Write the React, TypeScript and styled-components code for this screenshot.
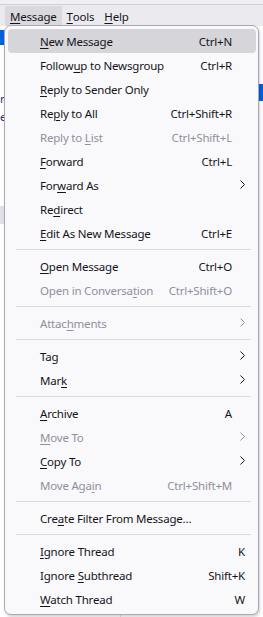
import React from 'react';
import styled, { createGlobalStyle } from 'styled-components';

const GlobalStyle = createGlobalStyle`
  html, body {
    margin: 0;
    padding: 0;
    background: #ffffff;
  }
  body {
    font-family: "Noto Sans", "Open Sans", sans-serif;
    font-size: 11.5px;
    letter-spacing: -0.2px;
    color: #15141a;
  }
`;

const Window = styled.div`
  position: relative;
  width: 263px;
  height: 617px;
  overflow: hidden;
  background: #ffffff;
`;

const TitleStrip = styled.div`
  height: 4px;
  background: #f0f0f4;
  border-bottom: 1px solid #cfcfd8;
`;

const MenuBar = styled.div`
  display: flex;
  align-items: stretch;
  height: 20px;
  padding: 1px 0 0 5px;
  background: #ebebef;
`;

const BarItem = styled.div<{ $open?: boolean }>`
  display: flex;
  align-items: center;
  padding: 0 5px;
  background: ${p => (p.$open ? '#dadade' : 'transparent')};
  color: #15141a;
`;

const Content = styled.div`
  display: flex;
  height: 592px;
`;

const FolderPane = styled.div`
  width: 120px;
  display: flex;
  flex-direction: column;
  padding-top: 4px;
  border-right: 1px solid #e0e0e6;
`;

const FolderRow = styled.div<{ $selected?: boolean; $muted?: boolean }>`
  height: ${p => (p.$muted ? '18px' : '15px')};
  background: ${p => (p.$selected ? '#0061e0' : p.$muted ? '#e0e0e6' : 'transparent')};
  color: #3a2a6e;
  line-height: 15px;
  margin-bottom: ${p => (p.$selected ? '46px' : '3px')};
`;

const Spacer = styled.div<{ $h: number }>`
  height: ${p => p.$h}px;
`;

const ThreadPane = styled.div`
  flex: 1;
  display: flex;
  flex-direction: column;
  padding-top: 58px;
`;

const ThreadRow = styled.div<{ $selected?: boolean }>`
  height: 17px;
  background: ${p => (p.$selected ? '#0061e0' : 'transparent')};
`;

const Popup = styled.div`
  position: absolute;
  left: 4px;
  top: 25px;
  box-sizing: border-box;
  width: 255px;
  padding: 3px 2px 3px 3px;
  background: #f9f9fb;
  border: 1px solid #a9a8b8;
  border-radius: 7px;
  box-shadow: 1px 2px 3px rgba(0, 0, 0, 0.18);
  display: flex;
  flex-direction: column;
`;

const Item = styled.div<{ $active?: boolean; $disabled?: boolean; $wide?: boolean }>`
  display: flex;
  align-items: center;
  height: 24px;
  padding: 0 ${p => (p.$wide ? '11px' : '24px')} 0 32px;
  border-radius: 4px;
  background: ${p => (p.$active ? '#d5d5da' : 'transparent')};
  color: ${p => (p.$disabled ? '#8f8f9d' : '#15141a')};
  position: relative;
`;

const Label = styled.span`
  flex: 1;
  white-space: nowrap;
`;

const Shortcut = styled.span`
  white-space: nowrap;
  text-align: right;
`;

const Key = styled.span`
  text-decoration: underline;
  text-underline-offset: 2px;
`;

const Arrow = styled.svg<{ $disabled?: boolean }>`
  position: absolute;
  right: 11px;
  top: 7px;
  width: 5px;
  height: 9px;
  stroke: ${p => (p.$disabled ? '#8f8f9d' : '#15141a')};
`;

const Separator = styled.div`
  height: 1px;
  margin: 4px 5px 4px 8px;
  background: #d9d9de;
`;

type Entry =
  | { sep: true }
  | {
      sep?: false;
      text: string;
      key?: number;
      shortcut?: string;
      sub?: boolean;
      disabled?: boolean;
      active?: boolean;
      wide?: boolean;
    };

const entries: Entry[] = [
  { text: 'New Message', key: 0, shortcut: 'Ctrl+N', active: true },
  { text: 'Followup to Newsgroup', key: 6, shortcut: 'Ctrl+R' },
  { text: 'Reply to Sender Only', key: 0 },
  { text: 'Reply to All', key: 2, shortcut: 'Ctrl+Shift+R' },
  { text: 'Reply to List', key: 9, shortcut: 'Ctrl+Shift+L', disabled: true },
  { text: 'Forward', key: 0, shortcut: 'Ctrl+L' },
  { text: 'Forward As', key: 3, sub: true },
  { text: 'Redirect', key: 2 },
  { text: 'Edit As New Message', key: 0, shortcut: 'Ctrl+E' },
  { sep: true },
  { text: 'Open Message', key: 0, shortcut: 'Ctrl+O' },
  { text: 'Open in Conversation', key: 16, shortcut: 'Ctrl+Shift+O', disabled: true },
  { sep: true },
  { text: 'Attachments', key: 5, sub: true, disabled: true },
  { sep: true },
  { text: 'Tag', sub: true },
  { text: 'Mark', key: 3, sub: true },
  { sep: true },
  { text: 'Archive', key: 0, shortcut: 'A' },
  { text: 'Move To', key: 0, sub: true, disabled: true },
  { text: 'Copy To', key: 0, sub: true },
  { text: 'Move Again', key: 8, shortcut: 'Ctrl+Shift+M', disabled: true },
  { sep: true },
  { text: 'Create Filter From Message…', key: 3 },
  { sep: true },
  { text: 'Ignore Thread', key: 0, shortcut: 'K', wide: true },
  { text: 'Ignore Subthread', key: 7, shortcut: 'Shift+K', wide: true },
  { text: 'Watch Thread', key: 0, shortcut: 'W', wide: true },
];

const withKey = (text: string, key?: number) => {
  if (key === undefined) return text;
  return (
    <>
      {text.slice(0, key)}
      <Key>{text[key]}</Key>
      {text.slice(key + 1)}
    </>
  );
};

const App: React.FC = () => {
  return (
    <Window>
      <GlobalStyle />
      <TitleStrip />
      <MenuBar>
        <BarItem $open>{withKey('Message', 0)}</BarItem>
        <BarItem>{withKey('Tools', 0)}</BarItem>
        <BarItem>{withKey('Help', 0)}</BarItem>
      </MenuBar>
      <Content>
        <FolderPane>
          <FolderRow $selected />
          <FolderRow>r</FolderRow>
          <FolderRow>e</FolderRow>
          <Spacer $h={79} />
          <FolderRow $muted />
        </FolderPane>
        <ThreadPane>
          <ThreadRow $selected />
        </ThreadPane>
      </Content>

      <Popup>
        {entries.map((e, i) =>
          e.sep ? (
            <Separator key={i} />
          ) : (
            <Item key={i} $active={e.active} $disabled={e.disabled} $wide={e.wide}>
              <Label>{withKey(e.text, e.key)}</Label>
              {e.shortcut && <Shortcut>{e.shortcut}</Shortcut>}
              {e.sub && (
                <Arrow $disabled={e.disabled} viewBox="0 0 5 9" fill="none" strokeWidth="1">
                  <polyline points="0.5,0.5 4.5,4.5 0.5,8.5" />
                </Arrow>
              )}
            </Item>
          )
        )}
      </Popup>
    </Window>
  );
};

export default App;
